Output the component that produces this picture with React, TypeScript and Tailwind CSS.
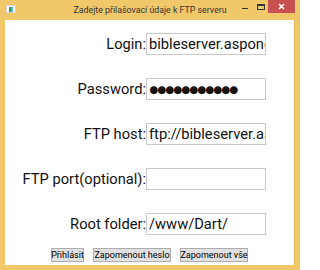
import React from "react";

const font = { fontFamily: 'Roboto, "Noto Sans", sans-serif' };
const dotFont = { fontFamily: 'Lato, sans-serif' };

function Row({ label, value, children }: { label: string; value?: string; children?: React.ReactNode }) {
  return (
    <div className="flex h-[22px] items-center">
      <div className="w-[141px] text-right text-[14.7px] leading-[22px] text-[#111] whitespace-nowrap">{label}</div>
      <div className="w-[120px] h-[22px] border border-[#c9c9c9] bg-white overflow-hidden flex items-center pl-[2px] text-[14.7px] leading-[20px] text-[#111] whitespace-nowrap">
        {children ?? value}
      </div>
    </div>
  );
}

const btn =
  "h-[14px] bg-[#e1e1e1] border border-[#adadad] text-[9px] leading-none text-black flex items-center justify-center whitespace-nowrap";

export default function App() {
  return (
    <div className="w-[300px] h-[270px] bg-[#f0c86a] flex flex-col overflow-hidden" style={font}>
      <div className="h-[20px] relative flex items-center justify-center shrink-0">
        <div className="absolute left-[6px] top-[5px] w-[10px] h-[8px] bg-white border border-[#d8d8d8] flex items-center pl-[2px]">
          <div className="w-[2px] h-[5px] bg-[#2c9d5a]" />
          <div className="w-[2px] h-[5px] bg-[#6aa9d8]" />
        </div>
        <span className="text-[8.8px] text-[#333] leading-none mt-[1px]">Zadejte přilašovací údaje k FTP serveru</span>
        <div className="absolute left-[242px] top-[8px] w-[6px] h-[1px] bg-[#333]" />
        <div className="absolute left-[257px] top-[4px] w-[8px] h-[6px] border border-[#333] border-t-2" />
        <div className="absolute left-[268px] top-0 w-[27px] h-[13px] bg-[#c75050] flex items-center justify-center">
          <svg width="7" height="7" viewBox="0 0 7 7">
            <path d="M1 1 L6 6 M6 1 L1 6" stroke="white" strokeWidth="1.6" />
          </svg>
        </div>
      </div>
      <div className="mx-[5px] h-[245px] bg-white border-r border-[#e2b658] flex flex-col pt-[13px] shrink-0">
        <div className="flex flex-col gap-[23px]">
          <Row label="Login:" value="bibleserver.aspone.cz" />
          <Row label="Password:">
            <span className="text-[16px] tracking-[-1.6px] leading-none" style={dotFont}>●●●●●●●●●●●</span>
          </Row>
          <Row label="FTP host:" value="ftp://bibleserver.aspone.cz" />
          <Row label="FTP port(optional):" value="" />
          <Row label="Root folder:" value="/www/Dart/" />
        </div>
        <div className="flex justify-center gap-[9px] mt-[13px]">
          <button className={`w-[33px] ${btn}`}>Přihlásit</button>
          <button className={`w-[78px] ${btn}`}>Zapomenout heslo</button>
          <button className={`w-[68px] ${btn}`}>Zapomenout vše</button>
        </div>
      </div>
    </div>
  );
}
